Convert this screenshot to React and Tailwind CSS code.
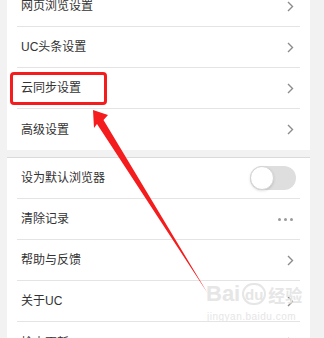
import React from 'react';

const font = { fontFamily: '"Liberation Sans", "Noto Sans CJK SC", sans-serif' };

const Chevron = () => (
  <svg width="7" height="11" viewBox="0 0 7 11" className="shrink-0">
    <polyline points="1,1 5.5,5.5 1,10" fill="none" stroke="#8c8c8c" strokeWidth="1.4" />
  </svg>
);

const Row = ({ label, right, last, pr = 'pr-[6px]' }) => (
  <div className="px-[10px]">
    <div
      className={`h-[41px] flex items-center justify-between pl-[4px] ${pr} ${last ? '' : 'border-b border-[#e4e4e4]'}`}
    >
      <span className="text-[12px] text-[#333333] leading-none">{label}</span>
      {right}
    </div>
  </div>
);

const Toggle = () => (
  <div className="w-[46px] h-[24px] rounded-full bg-[#dedede] relative">
    <div className="absolute left-0 top-0 w-[24px] h-[24px] rounded-full bg-white border border-[#d4d4d4] shadow-sm" />
  </div>
);

const Dots = () => (
  <div className="flex gap-[3px] items-center">
    <span className="w-[3px] h-[3px] rounded-full bg-[#9a9a9a]" />
    <span className="w-[3px] h-[3px] rounded-full bg-[#9a9a9a]" />
    <span className="w-[3px] h-[3px] rounded-full bg-[#9a9a9a]" />
  </div>
);

export default function App() {
  return (
    <div className="relative w-[324px] h-[338px] overflow-hidden bg-[#f2f2f2]" style={font}>
      <div className="flex h-full">
        <div className="w-[7px] shrink-0" />
        <div className="w-[303px] bg-white -mt-[14px]">
          <Row label="网页浏览设置" right={<Chevron />} />
          <Row label="UC头条设置" right={<Chevron />} />
          <Row label="云同步设置" right={<Chevron />} />
          <Row label="高级设置" right={<Chevron />} last />
          <div className="h-[8px] bg-[#f2f2f2] border-b border-[#dadada]" />
          <Row label="设为默认浏览器" right={<Toggle />} pr="pr-[4px]" />
          <Row label="清除记录" right={<Dots />} pr="pr-[7px]" />
          <Row label="帮助与反馈" right={<Chevron />} />
          <Row label="关于UC" right={<Chevron />} />
          <Row label="检查更新" right={<Chevron />} last />
        </div>
      </div>

      {/* red highlight box */}
      <div className="absolute left-[10px] top-[72px] w-[97px] h-[33px] border-[3px] border-[#f41c1c] rounded-[4px]" />

      {/* watermark */}
      <div className="absolute left-[206px] top-[283px] flex items-end gap-[2px] font-bold text-[#e6e6e6] leading-none">
        <span className="text-[22px]">Bai</span>
        <span className="text-[15px] w-[24px] h-[22px] rounded-full border-2 border-[#e6e6e6] flex items-center justify-center">du</span>
        <span className="text-[17px]">经验</span>
      </div>
      <div className="absolute left-[207px] top-[312px] text-[10px] text-[#e6e6e6] leading-none tracking-[0.5px]">
        jingyan.baidu.com
      </div>

      {/* red arrow */}
      <svg className="absolute left-0 top-0" width="324" height="338" viewBox="0 0 324 338">
        <polygon
          points="93,110 108,115 103.5,120 207.5,293 97,124 94,128"
          fill="#f41c1c"
        />
      </svg>
    </div>
  );
}
